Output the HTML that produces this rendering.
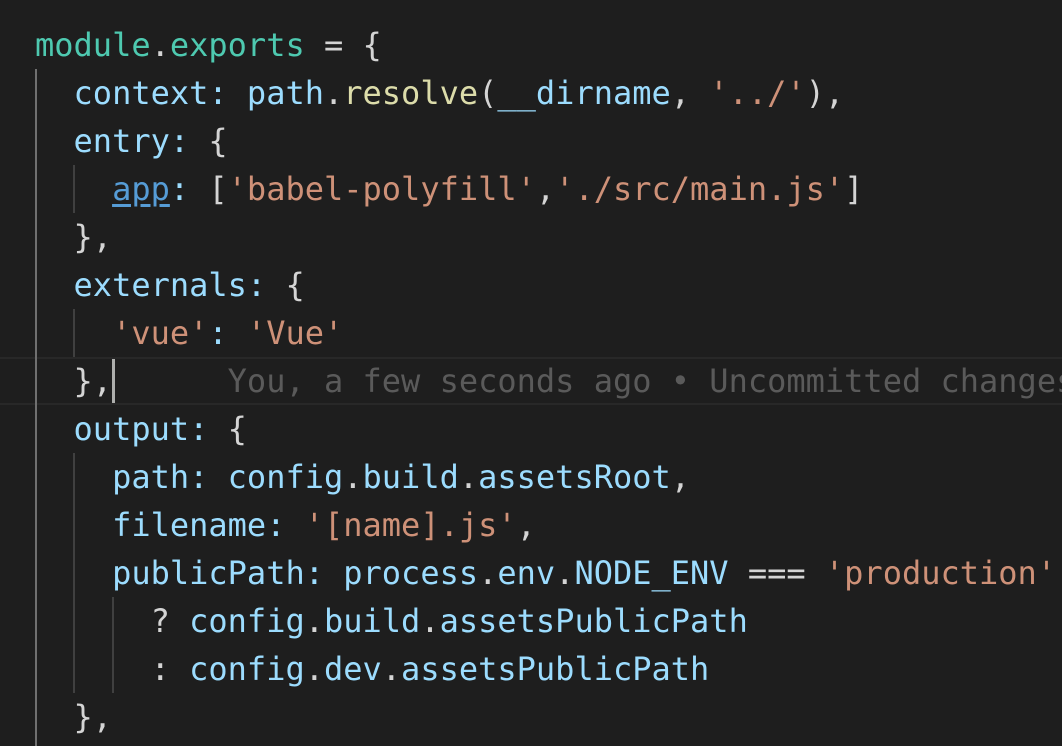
<!DOCTYPE html>
<html><head><style>
html,body{margin:0;padding:0;background:#1e1e1e;width:1062px;height:746px;overflow:hidden}
.code{position:absolute;left:35px;top:21px;font-family:"DejaVu Sans Mono","Liberation Mono",monospace;font-size:32px;color:#d4d4d4}
.l{height:48px;line-height:48px;white-space:pre}
.k{color:#9cdcfe}.t{color:#4ec9b0}.s{color:#ce9178}.f{color:#dcdcaa}
.a{color:#569cd6;text-decoration:underline;text-underline-offset:4px}
.g{color:#5a5a5a}
.guide{position:absolute;width:2px;background:#404040}
</style></head><body>
<div style="position:absolute;left:0;top:357px;width:1062px;height:44px;border-top:2px solid #282828;border-bottom:2px solid #282828"></div>
<div class="guide" style="left:35px;top:69px;height:677px;background:#707070"></div>
<div class="guide" style="left:73px;top:165px;height:48px"></div>
<div class="guide" style="left:73px;top:309px;height:48px"></div>
<div class="guide" style="left:73px;top:453px;height:240px"></div>
<div class="guide" style="left:112px;top:597px;height:96px"></div>
<div style="position:absolute;left:112px;top:359px;width:3px;height:44px;background:#aeafad"></div>
<div class="code"><div class="l"><span class="t">module</span>.<span class="t">exports</span> = {</div><div class="l">  <span class="k">context</span><span class="k">:</span> <span class="k">path</span>.<span class="f">resolve</span>(<span class="k">__dirname</span>, <span class="s">'../'</span>),</div><div class="l">  <span class="k">entry</span><span class="k">:</span> {</div><div class="l">    <span class="a">app</span><span class="k">:</span> [<span class="s">'babel-polyfill'</span>,<span class="s">'./src/main.js'</span>]</div><div class="l">  },</div><div class="l">  <span class="k">externals</span><span class="k">:</span> {</div><div class="l">    <span class="s">'vue'</span><span class="k">:</span> <span class="s">'Vue'</span></div><div class="l">  },      <span class="g">You, a few seconds ago • Uncommitted changes</span></div><div class="l">  <span class="k">output</span><span class="k">:</span> {</div><div class="l">    <span class="k">path</span><span class="k">:</span> <span class="k">config</span>.<span class="k">build</span>.<span class="k">assetsRoot</span>,</div><div class="l">    <span class="k">filename</span><span class="k">:</span> <span class="s">'[name].js'</span>,</div><div class="l">    <span class="k">publicPath</span><span class="k">:</span> <span class="k">process</span>.<span class="k">env</span>.<span class="k">NODE_ENV</span> === <span class="s">'production'</span></div><div class="l">      ? <span class="k">config</span>.<span class="k">build</span>.<span class="k">assetsPublicPath</span></div><div class="l">      : <span class="k">config</span>.<span class="k">dev</span>.<span class="k">assetsPublicPath</span></div><div class="l">  },</div></div>
</body></html>
